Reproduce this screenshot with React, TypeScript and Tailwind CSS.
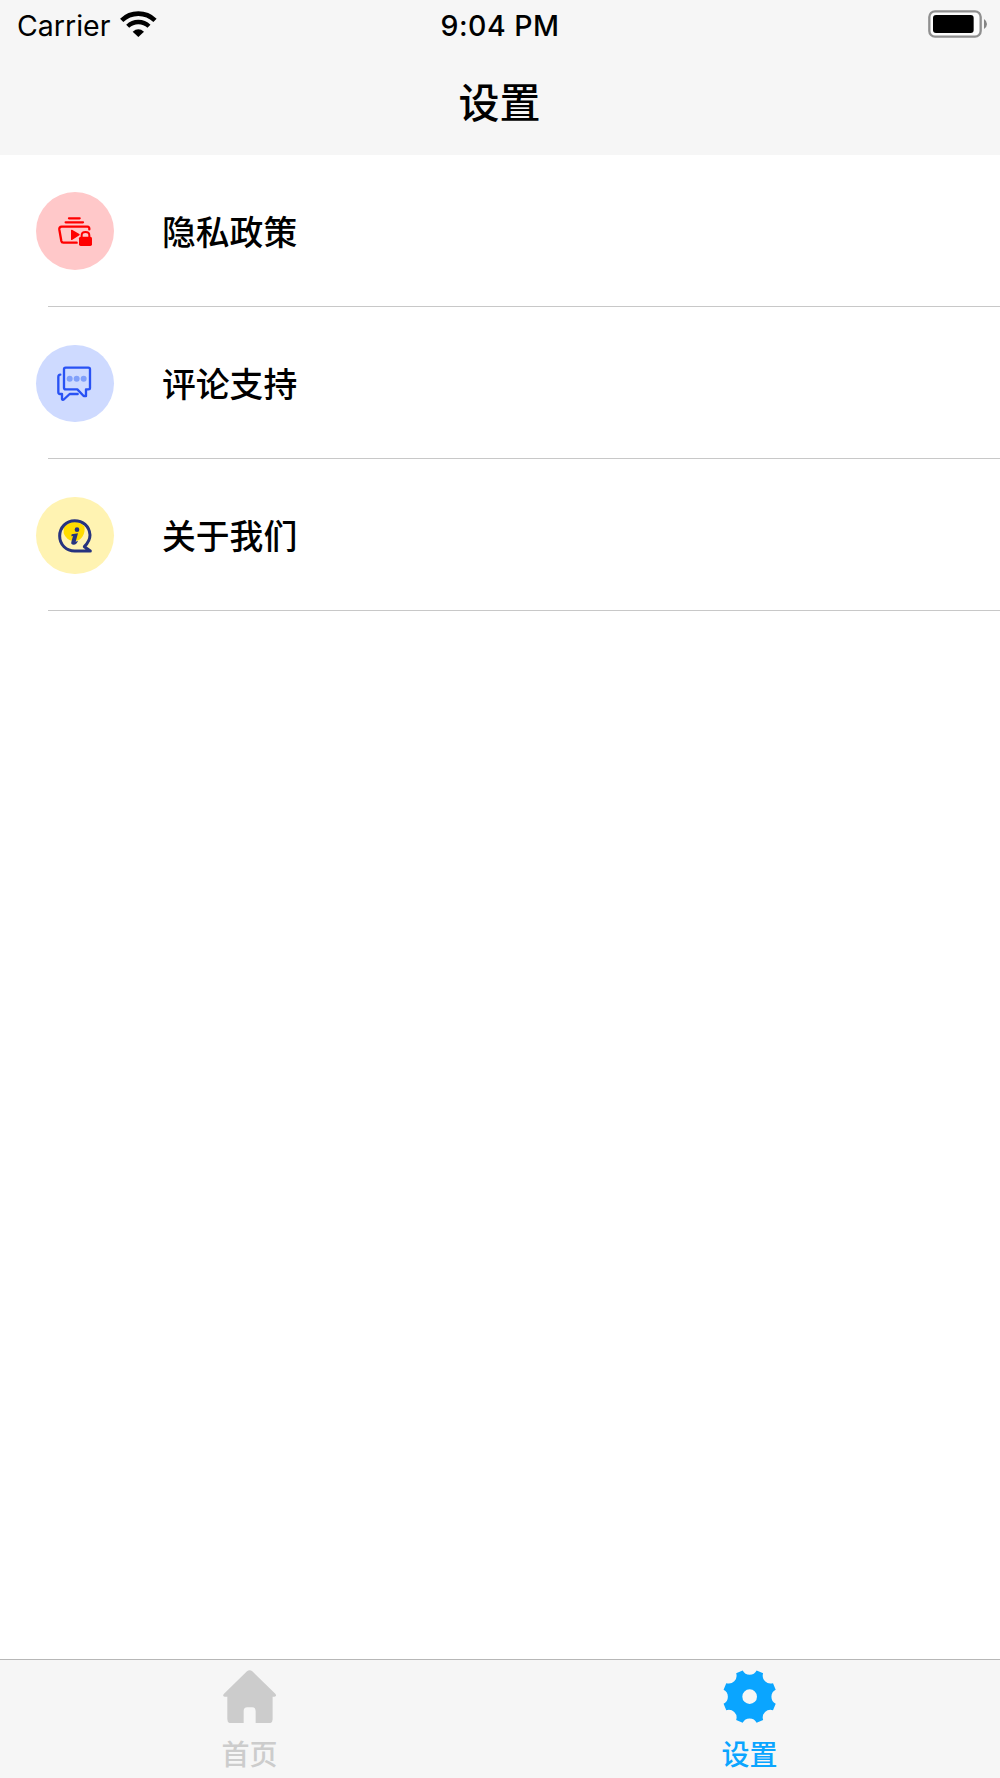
import type { ReactNode } from 'react'

type Row = {
  label: string
  bg: string
  icon: ReactNode
}

function WifiIcon() {
  return (
    <svg viewBox="0 0 110 82" className="mb-1 h-[27.3px] w-[36.7px]" fill="none">
      <path d="M5 31A72 72 0 0 1 105 31" stroke="#000" strokeWidth="14" />
      <path d="M23 49A46 46 0 0 1 87 49" stroke="#000" strokeWidth="13" />
      <path d="M38 65Q55 51 72 65L55 81Z" fill="#000" />
    </svg>
  )
}

function BatteryIcon() {
  return (
    <svg viewBox="0 0 180 84" className="mb-[3px] h-7 w-[60px]">
      <rect x="4" y="4" width="154" height="76" rx="17" fill="#fff" fillOpacity="0.7" stroke="#8f8f8f" strokeWidth="7" />
      <rect x="15" y="15" width="122" height="54" rx="9" />
      <path d="M168 27Q177 33 177 42T168 57Z" fill="#858585" />
    </svg>
  )
}

function PrivacyIcon() {
  return (
    <svg viewBox="0 0 104 90" className="ml-px h-[30px] w-[34.67px] overflow-visible" fill="none" stroke="#ff0000" strokeWidth="7" strokeLinecap="round" strokeLinejoin="round">
      <path d="M33 7H65M23 19H75" />
      <path d="M56 80H16Q11 80 10 75L4 41Q3 32 11 32H88Q95 32 94 40" />
      <path d="M41 43L63 56L41 70Z" fill="#ff0000" strokeWidth="4" />
      <rect x="63" y="62" width="39" height="28" rx="5" fill="#ff0000" stroke="none" />
      <path d="M71 63V58C71 45 94 45 94 58V63" strokeWidth="6" />
    </svg>
  )
}

function CommentIcon() {
  return (
    <svg viewBox="0 0 104 104" className="mb-px size-[34.67px] overflow-visible" fill="none" stroke="#2952f4" strokeWidth="7" strokeLinejoin="round" strokeLinecap="round">
      <path d="M26 5H94Q99 5 99 10V66Q99 70 94 70H87V90H80L61 70H26Q21 70 21 65V10Q21 5 26 5Z" />
      <path d="M10 26Q4 26 4 33V79Q4 84 9 84H15V99Q17 104 22 99L38 84H62" />
      <g fill="#81a0fa" stroke="none">
        <circle cx="38" cy="38" r="9" />
        <circle cx="59" cy="38" r="9" />
        <circle cx="80" cy="38" r="9" />
      </g>
    </svg>
  )
}

function AboutIcon() {
  return (
    <svg viewBox="0 0 102 102" className="size-[34px]" fill="none">
      <path d="M17 24Q50 -6 79 22C84 48 66 69 46 66Q25 64 17 43Z" fill="#ffdc00" />
      <path d="M79 83Q96 66 96 48C94 21 74 5 50 5C25 5 5 25 5 51S25 96 50 96H97Z" stroke="#26337f" strokeWidth="9" strokeLinejoin="round" />
      <circle cx="57" cy="32" r="7" fill="#26337f" />
      <path d="M41 46L60 43L53 68L60 65Q56 77 47 77Q38 77 40 69L45 51L40 52Z" fill="#26337f" />
    </svg>
  )
}

function HomeIcon() {
  return (
    <svg viewBox="0 0 160 160" className="size-[53.3px]" fill="#cccccc">
      <path d="M72 4Q80 -3 88 4L157 71Q163 79 154 80H149V148Q149 160 137 160H98V123Q98 112 88 112H73Q62 112 62 123V160H25Q13 160 13 148V80H5Q-3 79 3 71Z" />
    </svg>
  )
}

// eight teeth, with a round notch cut at every 45 degrees
const gearPath = Array.from({ length: 8 }, (_, k) => {
  const point = (deg: number) => {
    const a = (deg * Math.PI) / 180
    return `${(80 + 81 * Math.sin(a)).toFixed(2)} ${(80 - 81 * Math.cos(a)).toFixed(2)}`
  }
  const start = k * 45
  return `${k === 0 ? 'M' : 'L'}${point(start - 15)}A23.5 23.5 0 0 0 ${point(start + 15)}`
}).join('')

function GearIcon() {
  return (
    <svg viewBox="0 0 160 160" className="size-[53.3px] overflow-visible" fill="#0aa5ff">
      <path fillRule="evenodd" d={`${gearPath}ZM80 58a22 22 0 1 0 0 44a22 22 0 1 0 0 -44Z`} />
    </svg>
  )
}

const rows: Row[] = [
  { label: '隐私政策', bg: 'bg-[#ffc8c9]', icon: <PrivacyIcon /> },
  { label: '评论支持', bg: 'bg-[#cedaff]', icon: <CommentIcon /> },
  { label: '关于我们', bg: 'bg-[#fff3b2]', icon: <AboutIcon /> },
]

export default function App() {
  return (
    <div className="flex h-[1778px] w-[1000px] flex-col bg-white font-['Inter','Noto_Sans_CJK_SC',sans-serif] text-black">
      <header className="h-[154.6px] shrink-0 bg-[#f6f6f6]">
        <div className="grid h-[51px] grid-cols-[1fr_auto_1fr] items-center pl-[17px] pr-3">
          <div className="flex items-center gap-[10px]">
            <span className="pt-0.5 text-[28.5px] leading-none">Carrier</span>
            <WifiIcon />
          </div>
          <span className="mr-[5px] pt-0.5 text-center text-[28.5px] font-medium leading-none tracking-[0.5px]">9:04 PM</span>
          <div className="flex justify-end">
            <BatteryIcon />
          </div>
        </div>
        <h1 className="flex h-[103px] items-center justify-center pr-px pt-0.5 text-[41px] font-medium leading-none">设置</h1>
      </header>

      <ul className="flex-1">
        {rows.map((row) => (
          <li key={row.label} className="flex h-[152.2px] flex-col">
            <div className="flex flex-1 items-center gap-[48.5px] pl-9 pt-0.5">
              <span className={`flex size-[77.5px] items-center justify-center rounded-full ${row.bg}`}>{row.icon}</span>
              <span className="pt-[3px] text-[33.8px] font-medium leading-none">{row.label}</span>
            </div>
            <div className="ml-12 h-px bg-[#c8c8c8]" />
          </li>
        ))}
      </ul>

      <nav className="grid h-[119px] shrink-0 grid-cols-2 border-t border-[#b7b7b7] bg-[#f6f6f6] text-[28px] font-medium leading-none">
        <a className="flex flex-col items-center gap-[18.5px] pt-[9.5px] text-[#cccccc]">
          <HomeIcon />
          <span className="pr-px">首页</span>
        </a>
        <a className="flex flex-col items-center gap-[18.5px] pt-[9.5px] text-[#0aa5ff]">
          <GearIcon />
          <span className="pr-px">设置</span>
        </a>
      </nav>
    </div>
  )
}
